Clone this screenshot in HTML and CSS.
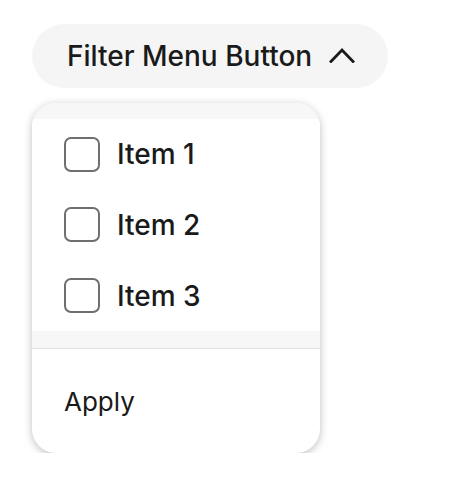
FILE: index.html
```html
<!DOCTYPE html>
<html>
<head>
<meta charset="utf-8">
<link rel="stylesheet" href="styles.css">
</head>
<body>
<div class="wrap">
  <button class="trigger">
    <span class="trigger-label">Filter Menu Button</span>
    <svg class="chevron" width="26" height="16" viewBox="0 0 26 16"><path d="M2 14.5 L13 3 L24 14.5" fill="none" stroke="#1a1a1a" stroke-width="2.8" stroke-linecap="square" stroke-linejoin="miter"/></svg>
  </button>
  <div class="menu">
    <ul class="list">
      <li class="item"><span class="box"></span><span class="label">Item 1</span></li>
      <li class="item"><span class="box"></span><span class="label">Item 2</span></li>
      <li class="item"><span class="box"></span><span class="label">Item 3</span></li>
    </ul>
    <div class="footer"><span class="apply">Apply</span></div>
  </div>
</div>
</body>
</html>
```
FILE: styles.css
```css
html, body { margin: 0; padding: 0; background: #fff; }
body { font-family: Inter, "Noto Sans", sans-serif; color: #1a1a1a; }
.wrap { padding: 24px 0 0 32px; display: flex; flex-direction: column; align-items: flex-start; }
.trigger {
  display: flex; align-items: center; gap: 17px;
  height: 64px; padding: 0 33px 0 35px;
  background: #f5f5f5; border: none; border-radius: 32px;
  font-family: inherit; font-size: 28px; color: #1a1a1a; font-weight: 500;
}
.chevron { display: block; margin-top: -2px; }
.menu {
  margin-top: 15px; width: 288px; background: #fff; border-radius: 24px;
  box-shadow: 0 2px 8px rgba(0,0,0,0.25); overflow: hidden;
}
.list { list-style: none; margin: 0; padding: 16px 0 17px; background: #f7f7f7; }
.item { display: flex; align-items: center; height: 71px; padding: 0 32px; background: #fff; gap: 17px; font-size: 28px; font-weight: 500; }
.item:first-child { height: 70px; }
.box { width: 32px; height: 31px; border: 2px solid #6f6f6f; border-radius: 7px; flex: none; }
.footer { border-top: 1px solid #e3e3e3; height: 104px; display: flex; align-items: center; padding: 0 32px; }
.apply { font-size: 26px; }
```
